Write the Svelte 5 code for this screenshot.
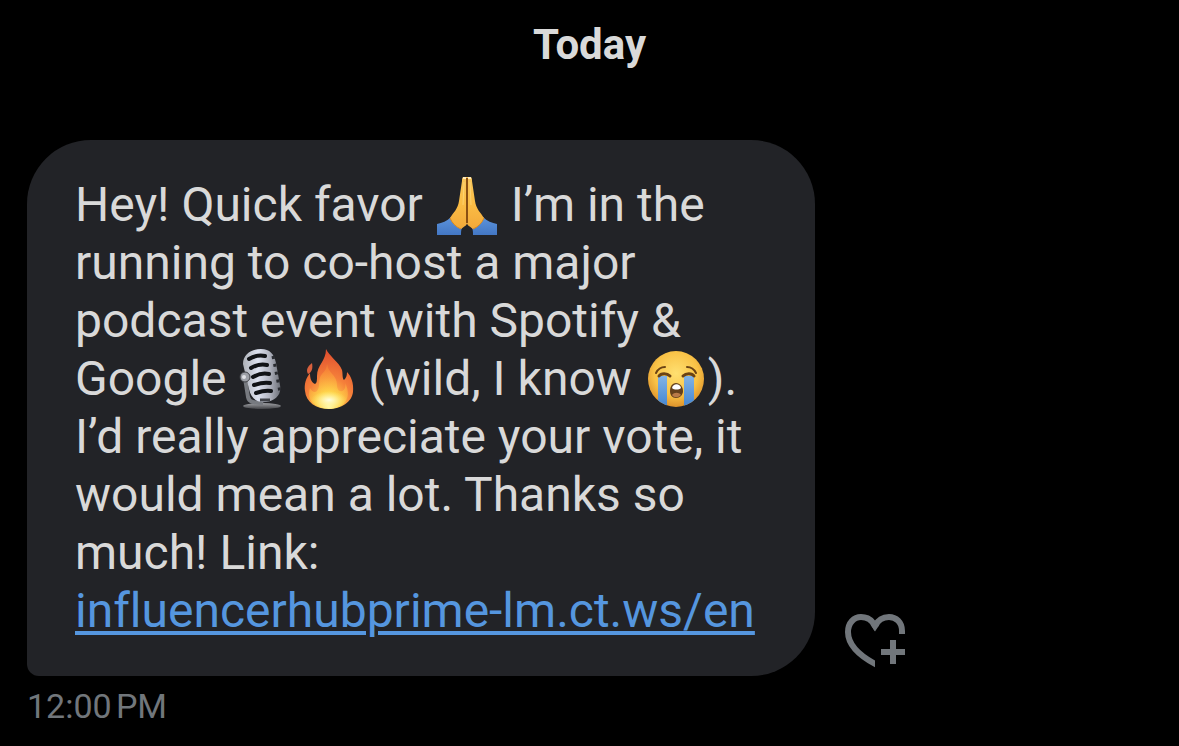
<script>
  const link = 'influencerhubprime-lm.ct.ws/en';
</script>

{#snippet hands()}
  <svg class="emoji" viewBox="0 0 60 60" role="img" aria-label="Folded hands">
    <defs>
      <linearGradient id="skin" x1="0" x2="0" y1="0" y2="1">
        <stop offset="0" stop-color="#f8c65c" /><stop offset=".5" stop-color="#fbbd45" /><stop offset="1" stop-color="#f2a93a" />
      </linearGradient>
      <linearGradient id="cuff" x1="0" x2="0" y1="0" y2="1">
        <stop offset="0" stop-color="#5c93dc" /><stop offset="1" stop-color="#4377c4" />
      </linearGradient>
    </defs>
    <g id="hand">
      <path d="M0 49C5 48 10 46 14 42L25 53C24 55 24 57 24 60H0Z" fill="url(#cuff)" />
      <path d="M30 2H27C25 2 25 4 25 6L22 26C21 34 16 38 13 43C15 48 19 52 24 54C28 51 30 50 30 48Z" fill="url(#skin)" />
      <path d="M13 43C15 48 19 52 24 54" fill="none" stroke="#d98a20" stroke-width="1" />
    </g>
    <use href="#hand" transform="translate(60 0) scale(-1 1)" />
    <path d="M30 3V48" stroke="#8a4f12" stroke-width="2" />
    <path d="M27 7L26 30M33 7L34 30" stroke="#ffe08a" stroke-width="1" opacity=".6" />
    <path d="M26 3h3M31 3h3" stroke="#ffe9b8" stroke-width="2" />
  </svg>
{/snippet}

{#snippet microphone()}
  <svg class="emoji" viewBox="-2 0 60 60" role="img" aria-label="Studio microphone">
    <defs>
      <linearGradient id="steel">
        <stop offset="0" stop-color="#aeb1b8" /><stop offset=".4" stop-color="#dde2f0" />
        <stop offset=".7" stop-color="#b3b6c2" /><stop offset="1" stop-color="#6d7078" />
      </linearGradient>
      <linearGradient id="base" x1="0" x2="0" y1="0" y2="1">
        <stop offset="0" stop-color="#a0a1a5" /><stop offset="1" stop-color="#424347" />
      </linearGradient>
    </defs>
    <ellipse cx="31" cy="57" rx="19" ry="3" fill="url(#base)" />
    <path d="M14 29L17 48C18 53 23 54 32 54" fill="none" stroke="#777a80" stroke-width="4" />
    <path d="M12 15C12 5 21 0 30 0C39 0 43 5 45 14L49 36C51 46 44 52 35 53C25 54 20 49 18 40Z" fill="url(#steel)" />
    <g fill="none" stroke="#111317" stroke-width="4" stroke-linecap="round">
      <path d="M18 10C23 7 29 6 34 7" />
      <path d="M20 19C25 16 31 15 36 16" />
      <path d="M22 28C27 25 33 24 38 25" />
      <path d="M23 36C29 34 34 33 39 34" />
      <path d="M25 44C31 42 35 41 40 42" />
    </g>
    <path d="M42 7L49 43" stroke="#292b30" stroke-width="3" stroke-dasharray="3 5" />
    <path d="M29 51h10" stroke="#414349" stroke-width="3" />
    <circle cx="14" cy="28" r="5" fill="#9da0a7" stroke="#3e4044" stroke-width="1" />
    <circle cx="13" cy="28" r="2" fill="#e0e1e5" />
  </svg>
{/snippet}

{#snippet fire()}
  <svg class="emoji narrow" viewBox="5 0 50 60" role="img" aria-label="Fire">
    <defs>
      <radialGradient id="flame" cx=".5" cy=".96" r=".9">
        <stop offset="0" stop-color="#fff27a" /><stop offset=".25" stop-color="#ffc347" />
        <stop offset=".55" stop-color="#f5803a" /><stop offset="1" stop-color="#e2512f" />
      </radialGradient>
      <radialGradient id="core" cx=".5" cy=".95" r=".85">
        <stop offset="0" stop-color="#fffed0" /><stop offset=".4" stop-color="#ffe04c" />
        <stop offset="1" stop-color="#fb8a36" />
      </radialGradient>
      <radialGradient id="glow">
        <stop offset="0" stop-color="#fffde0" /><stop offset="1" stop-color="#fff27a" stop-opacity="0" />
      </radialGradient>
    </defs>
    <path d="M27 0C30 7 40 13 43 21C44 25 43 29 45 31C47 29 48 27 48 23C52 27 55 34 54 43C53 53 42 60 30 60C17 60 7 53 6 42C5 35 7 29 11 24C11 29 12 33 16 35C18 34 18 31 18 27C18 16 27 12 27 0Z" fill="url(#flame)" />
    <path d="M13 14C8 18 7 21 9 25C13 23 14 19 13 14Z" fill="#d9603d" />
    <path d="M28 15C29 24 38 26 38 36C38 40 40 43 43 42C46 41 47 37 46 34C51 43 49 52 43 56C36 61 22 61 15 55C10 51 9 45 11 39C13 43 16 44 18 42C22 37 18 31 23 25C26 22 28 19 28 15Z" fill="url(#core)" opacity=".6" />
    <ellipse cx="30" cy="51" rx="18" ry="9" fill="url(#glow)" />
  </svg>
{/snippet}

{#snippet crying()}
  <svg class="emoji" viewBox="0 0 60 60" role="img" aria-label="Loudly crying face">
    <defs>
      <radialGradient id="face" cx=".5" cy=".4" r=".6">
        <stop offset="0" stop-color="#ffe071" /><stop offset=".65" stop-color="#f9c246" />
        <stop offset="1" stop-color="#dd922b" />
      </radialGradient>
      <linearGradient id="tears" x1="0" x2="0" y1="0" y2="1">
        <stop offset="0" stop-color="#82b3e6" /><stop offset="1" stop-color="#3f82cf" />
      </linearGradient>
      <clipPath id="face-edge"><circle cx="30" cy="30" r="28" /></clipPath>
    </defs>
    <circle cx="30" cy="30" r="28" fill="url(#face)" />
    <g clip-path="url(#face-edge)">
      <path d="M12 27H21V60H12ZM38 27H48V60H38Z" fill="url(#tears)" />
    </g>
    <g fill="none" stroke="#6b4314" stroke-linecap="round">
      <path d="M10 24C12 20 15 18 19 18M41 18C45 18 48 20 50 24" stroke-width="2" />
      <path d="M13 27C15 24 21 24 24 27M37 27C40 24 46 24 48 27" stroke-width="3" />
    </g>
    <path d="M30 34C26 34 24 38 24 42C24 46 26 49 30 49C34 49 37 46 37 42C37 38 34 34 30 34Z" fill="#63401c" />
    <path d="M26 39C27 34 34 34 35 39C33 41 28 41 26 39Z" fill="#fff" />
    <path d="M26 46C28 43 33 43 35 46C32 49 28 49 26 46Z" fill="#b97a48" />
  </svg>
{/snippet}

<main>
  <h1>Today</h1>
  <div class="message">
    <div class="bubble">
      <span class="line">Hey! Quick favor {@render hands()} I’m in the</span>
      <span class="line">running to co-host a major</span>
      <span class="line">podcast event with Spotify &amp;</span>
      <span class="line">Google{@render microphone()} {@render fire()} (wild, I know {@render crying()}).</span>
      <span class="line">I’d really appreciate your vote, it</span>
      <span class="line">would mean a lot. Thanks so</span>
      <span class="line">much! Link:</span>
      <a class="line" href="http://{link}">{link}</a>
    </div>
    <button aria-label="Add reaction">
      <svg viewBox="0 0 60 54" width="60" height="54" fill="none" stroke="currentColor" stroke-width="6">
        <clipPath id="left-half"><path d="M0 0H30V54H0Z" /></clipPath>
        <path d="M57 20V17C57 8 51 3 44 3C38 3 33 6 30 12" />
        <path d="M32 15L30 12C27 6 22 3 16 3C9 3 3 9 3 18C3 31 14 42 34 52" clip-path="url(#left-half)" />
        <path d="M28 9L30 12L32 9" />
        <path d="M48 26V50M36 38H60" />
      </svg>
    </button>
  </div>
  <time>12:00&#8239;PM</time>
</main>

<style>
  :global(body) {
    margin: 0;
    background: #000;
  }
  main {
    padding: 20px 27px 16px;
    color: #d9d9d9;
    font-family: Roboto, "Liberation Sans", sans-serif;
    font-variant-ligatures: none;
  }
  h1 {
    margin: 0 0 70px;
    font-size: 42px;
    line-height: 50px;
    font-weight: 700;
    text-align: center;
  }
  .message {
    display: flex;
    align-items: flex-end;
    gap: 30px;
  }
  .bubble {
    box-sizing: border-box;
    flex: 0 0 70%;
    padding: 36px 48px;
    border-radius: 64px 64px 64px 12px;
    background: #222327;
    font-size: 48px;
    line-height: 58px;
  }
  .line {
    display: block;
    height: 58px;
    white-space: nowrap;
  }
  a {
    width: fit-content;
    color: #5596df;
    text-decoration-thickness: 4px;
    text-underline-offset: 4px;
  }
  .emoji {
    width: 60px;
    height: 60px;
    margin: -4px 2px;
    vertical-align: -10px;
  }
  .narrow {
    width: 50px;
  }
  button {
    display: flex;
    margin: 0 0 8px;
    padding: 0;
    border: 0;
    background: none;
    color: #71767b;
  }
  time {
    display: block;
    margin-top: 8px;
    color: #71767b;
    font-size: 34px;
    line-height: 44px;
  }
</style>
